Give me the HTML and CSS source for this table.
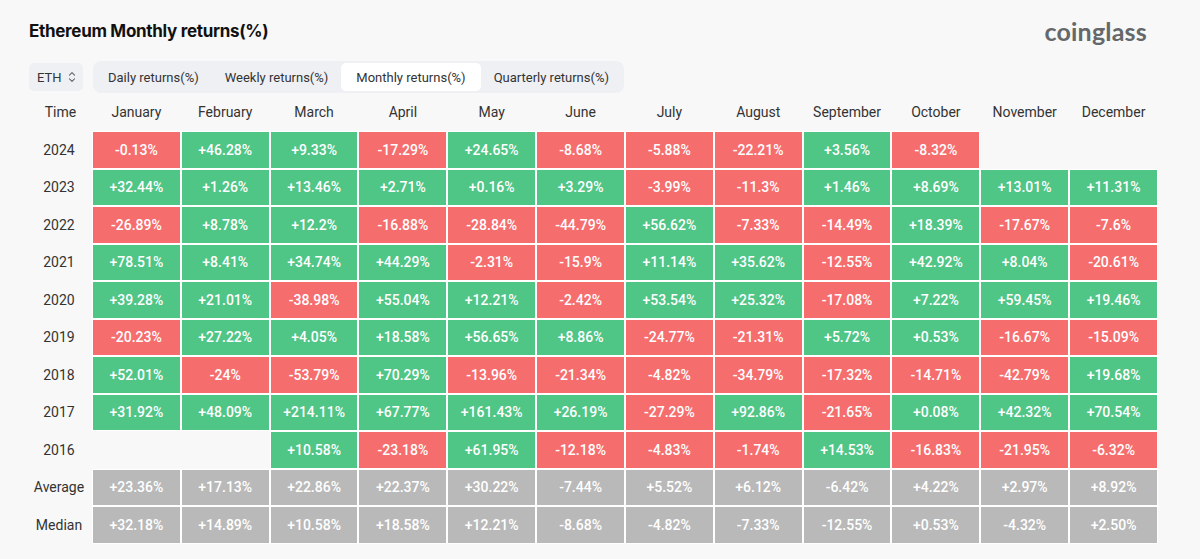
FILE: index.html
```html
<!DOCTYPE html>
<html>
<head>
<meta charset="utf-8">
<link rel="stylesheet" href="styles.css">
</head>
<body>
<div class="wrap">
  <div class="head">
    <h1 class="title">Ethereum Monthly returns(%)</h1>
    <div class="logo">coinglass</div>
  </div>
  <div class="toolbar">
    <div class="select">ETH
      <svg class="chev" width="8" height="12" viewBox="0 0 8 12"><path d="M1.5 4.2 4 1.7 6.5 4.2M1.5 7.8 4 10.3 6.5 7.8" fill="none" stroke="#666" stroke-width="1.1" stroke-linecap="round" stroke-linejoin="round"/></svg>
    </div>
    <div class="tabs">
      <div class="tab">Daily returns(%)</div>
      <div class="tab">Weekly returns(%)</div>
      <div class="tab active">Monthly returns(%)</div>
      <div class="tab">Quarterly returns(%)</div>
    </div>
  </div>
  <table class="grid">
    <colgroup><col class="c0"><col span="12"></colgroup>
    <thead>
      <tr><th>Time</th><th>January</th><th>February</th><th>March</th><th>April</th><th>May</th><th>June</th><th>July</th><th>August</th><th>September</th><th>October</th><th>November</th><th>December</th></tr>
    </thead>
    <tbody>
      <tr><th>2024</th><td class="dn">-0.13%</td><td class="up">+46.28%</td><td class="up">+9.33%</td><td class="dn">-17.29%</td><td class="up">+24.65%</td><td class="dn">-8.68%</td><td class="dn">-5.88%</td><td class="dn">-22.21%</td><td class="up">+3.56%</td><td class="dn">-8.32%</td><td class="empty"></td><td class="empty"></td></tr>
      <tr><th>2023</th><td class="up">+32.44%</td><td class="up">+1.26%</td><td class="up">+13.46%</td><td class="up">+2.71%</td><td class="up">+0.16%</td><td class="up">+3.29%</td><td class="dn">-3.99%</td><td class="dn">-11.3%</td><td class="up">+1.46%</td><td class="up">+8.69%</td><td class="up">+13.01%</td><td class="up">+11.31%</td></tr>
      <tr><th>2022</th><td class="dn">-26.89%</td><td class="up">+8.78%</td><td class="up">+12.2%</td><td class="dn">-16.88%</td><td class="dn">-28.84%</td><td class="dn">-44.79%</td><td class="up">+56.62%</td><td class="dn">-7.33%</td><td class="dn">-14.49%</td><td class="up">+18.39%</td><td class="dn">-17.67%</td><td class="dn">-7.6%</td></tr>
      <tr><th>2021</th><td class="up">+78.51%</td><td class="up">+8.41%</td><td class="up">+34.74%</td><td class="up">+44.29%</td><td class="dn">-2.31%</td><td class="dn">-15.9%</td><td class="up">+11.14%</td><td class="up">+35.62%</td><td class="dn">-12.55%</td><td class="up">+42.92%</td><td class="up">+8.04%</td><td class="dn">-20.61%</td></tr>
      <tr><th>2020</th><td class="up">+39.28%</td><td class="up">+21.01%</td><td class="dn">-38.98%</td><td class="up">+55.04%</td><td class="up">+12.21%</td><td class="dn">-2.42%</td><td class="up">+53.54%</td><td class="up">+25.32%</td><td class="dn">-17.08%</td><td class="up">+7.22%</td><td class="up">+59.45%</td><td class="up">+19.46%</td></tr>
      <tr><th>2019</th><td class="dn">-20.23%</td><td class="up">+27.22%</td><td class="up">+4.05%</td><td class="up">+18.58%</td><td class="up">+56.65%</td><td class="up">+8.86%</td><td class="dn">-24.77%</td><td class="dn">-21.31%</td><td class="up">+5.72%</td><td class="up">+0.53%</td><td class="dn">-16.67%</td><td class="dn">-15.09%</td></tr>
      <tr><th>2018</th><td class="up">+52.01%</td><td class="dn">-24%</td><td class="dn">-53.79%</td><td class="up">+70.29%</td><td class="dn">-13.96%</td><td class="dn">-21.34%</td><td class="dn">-4.82%</td><td class="dn">-34.79%</td><td class="dn">-17.32%</td><td class="dn">-14.71%</td><td class="dn">-42.79%</td><td class="up">+19.68%</td></tr>
      <tr><th>2017</th><td class="up">+31.92%</td><td class="up">+48.09%</td><td class="up">+214.11%</td><td class="up">+67.77%</td><td class="up">+161.43%</td><td class="up">+26.19%</td><td class="dn">-27.29%</td><td class="up">+92.86%</td><td class="dn">-21.65%</td><td class="up">+0.08%</td><td class="up">+42.32%</td><td class="up">+70.54%</td></tr>
      <tr><th>2016</th><td class="empty"></td><td class="empty"></td><td class="up">+10.58%</td><td class="dn">-23.18%</td><td class="up">+61.95%</td><td class="dn">-12.18%</td><td class="dn">-4.83%</td><td class="dn">-1.74%</td><td class="up">+14.53%</td><td class="dn">-16.83%</td><td class="dn">-21.95%</td><td class="dn">-6.32%</td></tr>
      <tr><th>Average</th><td class="avg">+23.36%</td><td class="avg">+17.13%</td><td class="avg">+22.86%</td><td class="avg">+22.37%</td><td class="avg">+30.22%</td><td class="avg">-7.44%</td><td class="avg">+5.52%</td><td class="avg">+6.12%</td><td class="avg">-6.42%</td><td class="avg">+4.22%</td><td class="avg">+2.97%</td><td class="avg">+8.92%</td></tr>
      <tr><th>Median</th><td class="avg">+32.18%</td><td class="avg">+14.89%</td><td class="avg">+10.58%</td><td class="avg">+18.58%</td><td class="avg">+12.21%</td><td class="avg">-8.68%</td><td class="avg">-4.82%</td><td class="avg">-7.33%</td><td class="avg">-12.55%</td><td class="avg">+0.53%</td><td class="avg">-4.32%</td><td class="avg">+2.50%</td></tr>
    </tbody>
  </table>
</div>
</body>
</html>
```

FILE: styles.css
```css
* { box-sizing: border-box; }
html, body { margin: 0; padding: 0; }
body {
  background: #f8f8f8;
  font-family: Roboto, "Liberation Sans", sans-serif;
  color: #333;
  width: 1200px;
  height: 559px;
  overflow: hidden;
}
.wrap {
  padding: 18px 0 0 29px;
  width: 1159px;
}
.head {
  display: flex;
  justify-content: space-between;
  align-items: center;
  height: 26px;
}
.title {
  margin: 0;
  font-family: Inter, "Liberation Sans", sans-serif;
  font-weight: 700;
  font-size: 17px;
  line-height: 26px;
  color: #111;
  letter-spacing: -0.3px;
}
.logo {
  font-family: Lato, "DejaVu Sans", sans-serif;
  font-weight: 700;
  font-size: 25px;
  color: #65686b;
  margin-right: 12px;
  letter-spacing: 0.2px;
  line-height: 26px;
}
.toolbar {
  display: flex;
  align-items: center;
  gap: 10px;
  margin-top: 17px;
  height: 32px;
}
.select {
  display: flex;
  align-items: center;
  gap: 6px;
  height: 28px;
  width: 54px;
  padding-left: 8px;
  background: #eef0f3;
  border-radius: 5px;
  font-size: 13px;
  color: #333;
}
.chev { display: block; }
.tabs {
  display: flex;
  align-items: center;
  height: 32px;
  padding: 2px;
  background: #eef0f3;
  border-radius: 8px;
}
.tab {
  height: 28px;
  display: flex;
  align-items: center;
  padding: 0 13px;
  font-size: 13px;
  color: #333;
  border-radius: 5px;
}
.tab.active {
  background: #fff;
  padding: 0 15px;
}
.grid {
  border-collapse: separate;
  border-spacing: 0;
  table-layout: fixed;
  width: 1129px;
}
.grid col.c0 { width: 63px; }
.grid th {
  font-weight: 400;
  font-size: 14px;
  color: #333;
  height: 37.5px;
  padding: 0;
  text-align: center;
}
.grid thead th { height: 38px; }
.grid tbody th { padding-right: 3px; }
.grid td {
  height: 37.5px;
  padding: 0;
  text-align: center;
  color: #fff;
  font-weight: 500;
  font-size: 14px;
  border: 1px solid #fff;
}
.grid td.up { background: #4fc586; }
.grid td.dn { background: #f66d6e; }
.grid td.avg { background: #b9b9b9; }
.grid td.empty { border-color: transparent; background: transparent; }
```
